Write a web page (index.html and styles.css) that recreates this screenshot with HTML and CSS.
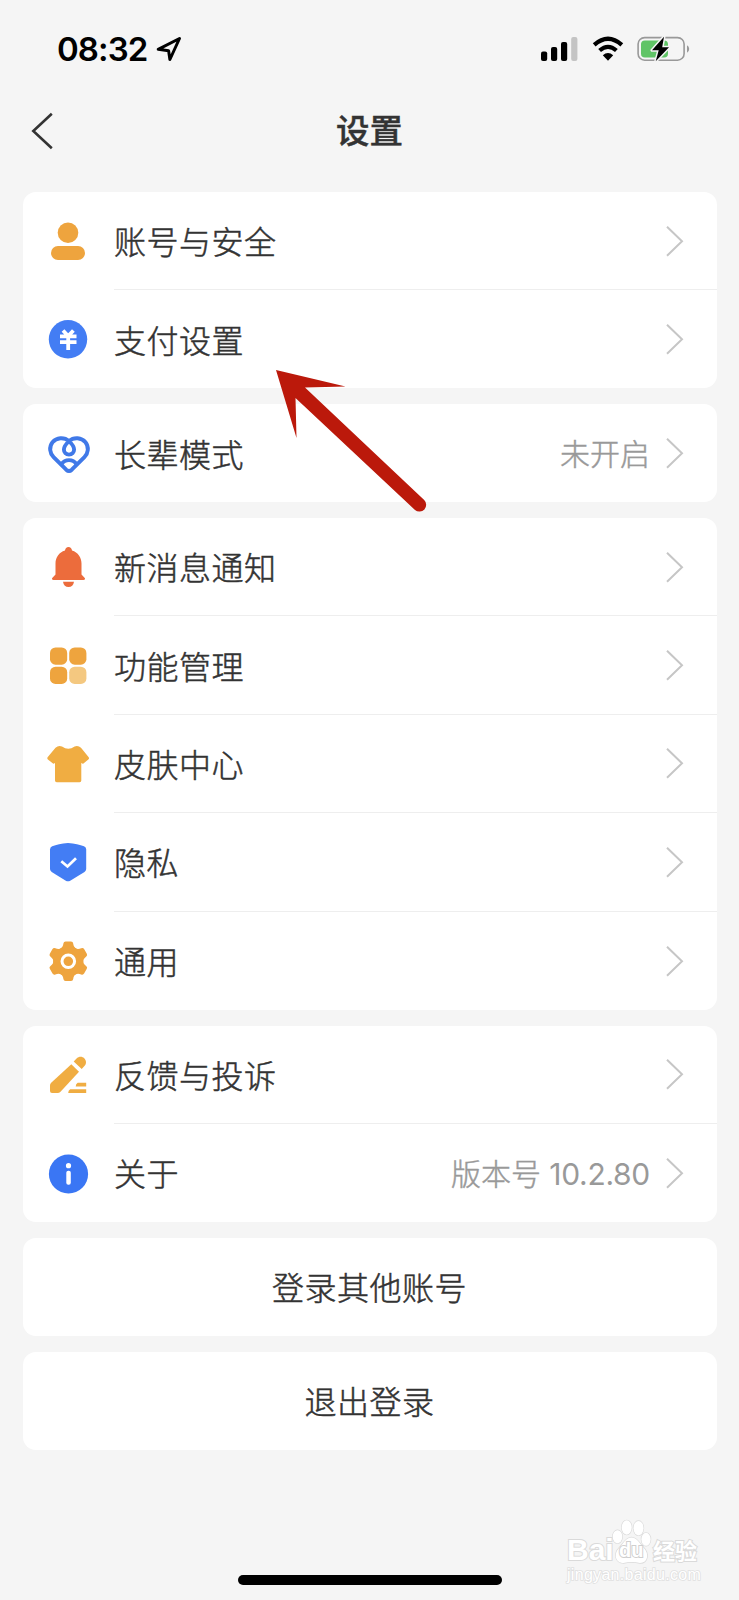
FILE: index.html
```html
<!DOCTYPE html>
<html lang="zh-CN">
<head>
<meta charset="utf-8">
<title>设置</title>
<link rel="stylesheet" href="styles.css">
</head>
<body>
<div class="screen">
  <header class="status">
    <span class="time">08:32</span>
    <svg class="locate" width="28" height="28" viewBox="0 0 28 28"><path d="M3.2 14.3 24.500 3.500 14.900 24.500 13.600 15.800Z" fill="none" stroke="#000" stroke-width="3" stroke-linejoin="round"/></svg>
    <div class="indicators">
      <svg width="37" height="26" viewBox="0 0 37 26"><rect x="0" y="15.5" width="6.2" height="9.5" rx="2"/><rect x="10" y="11" width="6.2" height="14" rx="2"/><rect x="20" y="6" width="6.2" height="19" rx="2"/><rect x="30.2" y="1" width="6.2" height="24" rx="2" fill="#c4c4c4"/></svg>
      <svg class="wifi" width="32" height="26" viewBox="0 0 32 26"><path d="M2.2 8.9Q16 -3.4 29.8 8.9M7.6 14.5Q16 7.2 24.4 14.5" fill="none" stroke="#000" stroke-width="4.2"/><path d="M10.8 19.3Q16 14.8 21.2 19.3L16 24.8Z"/></svg>
      <svg class="battery" width="54" height="26" viewBox="0 0 54 26"><rect x="1.1" y="1.6" width="46" height="22.6" rx="6.5" fill="none" stroke="#999" stroke-width="1.6"/><rect x="4" y="4.5" width="27" height="17" rx="3.8" fill="#60c466"/><path d="M50 9.2q2.2 1.2 2.2 3.8t-2.2 3.8z" fill="#999"/><path d="M27 .8 15 14.3h6.7L18.7 25.3 32 11.2h-6.8Z" stroke="#f5f5f5" stroke-width="3" paint-order="stroke" stroke-linejoin="round"/></svg>
    </div>
  </header>

  <nav class="nav">
    <svg class="back" width="24" height="38" viewBox="0 0 24 38"><path d="M21.8 1.7 3.3 19l18.5 17.3" fill="none" stroke="#333" stroke-width="2.6"/></svg>
    <h1 class="title">设置</h1>
  </nav>

  <main class="cards">
    <section class="card">
      <div class="row">
        <svg class="icon" viewBox="0 0 48 48"><g fill="#eea43e"><circle cx="24" cy="15.8" r="10.3"/><rect x="7" y="29" width="34" height="14" rx="7"/></g></svg>
        <div class="cell"><span class="label">账号与安全</span><svg class="chevron" viewBox="0 0 18 32"><path d="M1 1.8 16 16.300 1 30.800"/></svg></div>
      </div>
      <div class="row">
        <svg class="icon" viewBox="0 0 48 48"><circle cx="24" cy="24.3" r="19.2" fill="#437df4"/><path d="M19 15.500 24.200 21l5.200-5.500M16 21.400h16.500M16 27.200h16.500M24.200 21V35" fill="none" stroke="#fff" stroke-width="3.800"/></svg>
        <div class="cell"><span class="label">支付设置</span><svg class="chevron" viewBox="0 0 18 32"><path d="M1 1.8 16 16.300 1 30.800"/></svg></div>
      </div>
    </section>

    <section class="card">
      <div class="row">
        <svg class="icon" viewBox="0 0 48 48"><g fill="none" stroke="#4079e8" stroke-width="3.9" stroke-linejoin="round" stroke-linecap="round"><path d="M25 12.2C20 7.700 12.500 8.500 8.500 13.300C4.800 18 5.700 24.200 9.600 28.200L22.200 40.700Q25 43.300 27.800 40.700L40.400 28.200C44.300 24.200 45.200 18 41.500 13.300C37.500 8.500 30 7.700 25 12.200C21.500 15.500 19.900 17.700 19.900 20.600C19.900 23.600 22 25.600 25 25.600S30.100 23.600 30.100 20.600C30.100 17.700 28.500 15.500 25 12.200Z"/><path d="M17.500 35.200C21 29.800 29 29.800 32.500 35.200"/></g></svg>
        <div class="cell"><span class="label">长辈模式</span><span class="value">未开启</span><svg class="chevron" viewBox="0 0 18 32"><path d="M1 1.8 16 16.300 1 30.800"/></svg></div>
      </div>
    </section>

    <section class="card card-tall">
      <div class="row">
        <svg class="icon" viewBox="0 0 48 48"><g fill="#ec6c3c"><path d="M21 7.500Q21.500 4 24.500 4T28 7.500C34 9.200 37.500 14.500 37.500 20.500V31.500L41 35.200Q41.500 37 39.500 37H9.500Q7.500 37 8 35.200L11.500 31.500V20.500C11.500 14.500 15 9.200 21 7.500Z"/><path d="M19 38.800H30C29.500 42.300 27.500 44 24.500 44S19.500 42.300 19 38.800Z"/></g></svg>
        <div class="cell"><span class="label">新消息通知</span><svg class="chevron" viewBox="0 0 18 32"><path d="M1 1.8 16 16.300 1 30.800"/></svg></div>
      </div>
      <div class="row">
        <svg class="icon" viewBox="0 0 48 48"><g fill="#eea43e"><rect x="6" y="5.500" width="17.200" height="17.200" rx="5.500"/><rect x="25.200" y="5.500" width="17.200" height="17.200" rx="5.500"/><rect x="6" y="24.700" width="17.200" height="17.200" rx="5.500"/><rect x="25.200" y="24.700" width="17.200" height="17.200" rx="5.500" fill="#f4c880"/></g></svg>
        <div class="cell"><span class="label">功能管理</span><svg class="chevron" viewBox="0 0 18 32"><path d="M1 1.8 16 16.300 1 30.800"/></svg></div>
      </div>
      <div class="row">
        <svg class="icon" viewBox="0 0 48 48"><path d="M11.500 7.700Q14.500 5 18 6.500Q24.300 11.200 30.600 6.500Q34 5 37 7.700L44.700 17.200Q45.500 18.500 44.300 19.500L39.500 23.500Q38.500 24 37.300 22.800V40.500Q37.300 42.200 35.600 42.200H12.700Q11 42.200 11 40.500V22.800Q10 24 9 23.500L3.900 19.500Q2.900 18.500 3.600 17.200Z" fill="#f0ad42"/></svg>
        <div class="cell"><span class="label">皮肤中心</span><svg class="chevron" viewBox="0 0 18 32"><path d="M1 1.8 16 16.300 1 30.800"/></svg></div>
      </div>
      <div class="row">
        <svg class="icon" viewBox="0 0 48 48"><path d="M24 5Q34 6 40 8.200Q42.200 9.200 42.200 11.500V31Q42.200 32.800 40.500 33.900L26.200 42.700Q24 44 21.800 42.700L7.700 33.900Q6 32.800 6 31V11.500Q6 9.200 8.200 8.200Q14 6 24 5Z" fill="#437df4"/><path d="m17.300 23.200 6.200 5.300 8.500-8.300" fill="none" stroke="#fff" stroke-width="2.700"/></svg>
        <div class="cell"><span class="label">隐私</span><svg class="chevron" viewBox="0 0 18 32"><path d="M1 1.8 16 16.300 1 30.800"/></svg></div>
      </div>
      <div class="row">
        <svg class="icon" viewBox="0 0 48 48"><g fill="#eea43e" transform="translate(24.300 24.300)"><circle r="15"/><g id="tooth"><path d="M-8.500-12Q-5.200-14-4.900-17.700-4.700-19.800-2.700-19.800H2.700Q4.700-19.800 4.900-17.700 5.200-14 8.500-12L0 0Z"/></g><use href="#tooth" transform="rotate(60)"/><use href="#tooth" transform="rotate(120)"/><use href="#tooth" transform="rotate(180)"/><use href="#tooth" transform="rotate(240)"/><use href="#tooth" transform="rotate(300)"/><circle r="6.300" stroke="#fff" stroke-width="3"/></g></svg>
        <div class="cell"><span class="label">通用</span><svg class="chevron" viewBox="0 0 18 32"><path d="M1 1.8 16 16.300 1 30.800"/></svg></div>
      </div>
    </section>

    <section class="card">
      <div class="row">
        <svg class="icon" viewBox="0 0 48 48"><g fill="#f0ad42"><path d="M27.300 13.200 35 20.700 16.500 40.800Q15.300 42 13.500 42H8Q6 42 6 40V34.500Q6 33 7.200 31.800Z"/><path d="M29.700 10.600 32.300 7.700C35 5 38.200 5.200 40.200 7.200S43 12.500 40.200 15.200L37.700 18Z"/><path d="M33.700 31.800H42.200V35.500H31.700Q31.700 33 33.700 31.800ZM26.200 38.300H42.200V42H24.200Q24.200 39.500 26.200 38.300Z"/></g></svg>
        <div class="cell"><span class="label">反馈与投诉</span><svg class="chevron" viewBox="0 0 18 32"><path d="M1 1.8 16 16.300 1 30.800"/></svg></div>
      </div>
      <div class="row">
        <svg class="icon" viewBox="0 0 48 48"><circle cx="24.500" cy="25" r="19.600" fill="#3a76f4"/><circle cx="24.500" cy="16.700" r="2.600" fill="#fff"/><rect x="22.300" y="21.700" width="4.500" height="14" rx="2" fill="#fff"/></svg>
        <div class="cell"><span class="label">关于</span><span class="value">版本号 <span class="number">10.2.80</span></span><svg class="chevron" viewBox="0 0 18 32"><path d="M1 1.8 16 16.300 1 30.800"/></svg></div>
      </div>
    </section>

    <button class="card action">登录其他账号</button>
    <button class="card action">退出登录</button>
  </main>

  <footer class="foot"><div class="home-bar"></div></footer>

  <svg class="pointer" width="154" height="148" viewBox="0 0 154 148"><path d="M2 2 71.500 18.500 31 19.500 150.200 132A6.800 6.800 0 0 1 141 142L21.500 30 22.500 70Z" fill="#bb190b"/></svg>

  <div class="watermark">
    <div class="brand">
      <span class="bai">Bai</span>
      <span class="paw">
        <svg width="41" height="46" viewBox="0 0 41 46"><g fill="#fff" stroke="#dadada" stroke-width="1.300"><ellipse cx="5.500" cy="17.700" rx="4.800" ry="6.500"/><ellipse cx="14.700" cy="8.500" rx="5" ry="7.200"/><ellipse cx="26.500" cy="9.200" rx="5" ry="7.200"/><ellipse cx="34" cy="20.300" rx="4.600" ry="6.500"/><path d="M19.500 18.500C25 18.500 27 24 31.500 28.500C37.500 34.500 36 44 28 44Q19.500 42 11.500 44C3.500 44 1 35 7.500 28.500C12 24 14 18.500 19.500 18.500Z"/></g></svg>
        <span class="du">du</span>
      </span>
      <span class="exp">经验</span>
    </div>
    <div class="site">jingyan.baidu.com</div>
  </div>
</div>
</body>
</html>
```
FILE: styles.css
```css
* { box-sizing: border-box; }
body {
  margin: 0;
  background: #f5f5f5;
  color: #333;
  font-family: Inter, "Noto Sans CJK SC", sans-serif;
}
.screen {
  position: relative;
  width: 739px;
  height: 1600px;
  overflow: hidden;
  display: flex;
  flex-direction: column;
}
svg { display: block; flex: none; }

.status {
  height: 98px;
  padding: 0 48.5px 0 57px;
  display: flex;
  align-items: center;
  color: #000;
}
.time { font-size: 33px; font-weight: 600; letter-spacing: -.9px; width: 98px; white-space: nowrap; }
.indicators { margin-left: auto; display: flex; align-items: center; }
.wifi { margin-left: 14px; }
.battery { margin-left: 13px; }

.nav {
  position: relative;
  height: 94px;
  display: flex;
  justify-content: center;
  padding-top: 8px;
}
.back { position: absolute; left: 30px; top: 14px; }
.title { margin: 0; font-size: 33.5px; line-height: 50px; font-weight: 500; -webkit-text-stroke: .4px #333; }

.cards {
  padding: 0 22.5px;
  display: flex;
  flex-direction: column;
  gap: 16px;
}
.card { background: #fff; border-radius: 13px; --row: 98px; }
.card-tall { --row: 98.4px; }
.row { height: var(--row); display: flex; align-items: center; padding-left: 21.5px; }
.icon { width: 48px; height: 48px; margin-right: 22px; }
.cell {
  flex: 1;
  height: 100%;
  display: flex;
  align-items: center;
  padding-right: 32.5px;
}
.row:not(:last-child) .cell { border-bottom: 1px solid #eee; }
.label {
  flex: 1;
  padding-bottom: 1px;
  font-size: 32px;
  font-weight: 300;
  letter-spacing: .5px;
  -webkit-text-stroke: .5px #333;
}
.value {
  margin-right: 16px;
  padding-bottom: 2px;
  font-size: 30px;
  font-weight: 300;
  color: #999;
  white-space: nowrap;
  -webkit-text-stroke: .45px #999;
}
.number { font-weight: 400; letter-spacing: -.3px; -webkit-text-stroke: 0; }
.chevron { width: 18px; height: 32px; }
.chevron path { fill: none; stroke: #c6c6c6; stroke-width: 2; }
.action {
  height: 98px;
  border: 0;
  padding: 0 0 1px;
  color: #333;
  font: 300 32px Inter, "Noto Sans CJK SC", sans-serif;
  letter-spacing: .5px;
  -webkit-text-stroke: .5px #333;
}

.foot { margin-top: auto; padding-bottom: 15px; display: flex; justify-content: center; }
.home-bar { width: 264px; height: 10px; border-radius: 5px; background: #000; }

/* Annotation arrow lying over the first two cards */
.pointer { position: absolute; left: 274px; top: 368px; }

.watermark {
  position: absolute;
  left: 567px;
  top: 1519px;
  width: 134px;
  color: #fff;
  -webkit-text-stroke: 2px #dadada;
  paint-order: stroke;
}
.brand { display: flex; align-items: flex-end; height: 46px; }
.bai { width: 45px; font: 700 30px/30px "Liberation Sans", sans-serif; }
.paw { position: relative; }
.du { position: absolute; left: 7px; top: 19px; font: 700 20px/24px "Liberation Sans", sans-serif; -webkit-text-stroke-color: #cfcfcf; }
.exp { font: 700 22px/32px "Noto Sans CJK SC", sans-serif; }
.site { font: 400 16px/20px "Liberation Sans", sans-serif; letter-spacing: .3px; -webkit-text-stroke: 1.6px #e0e0e0; }
```
